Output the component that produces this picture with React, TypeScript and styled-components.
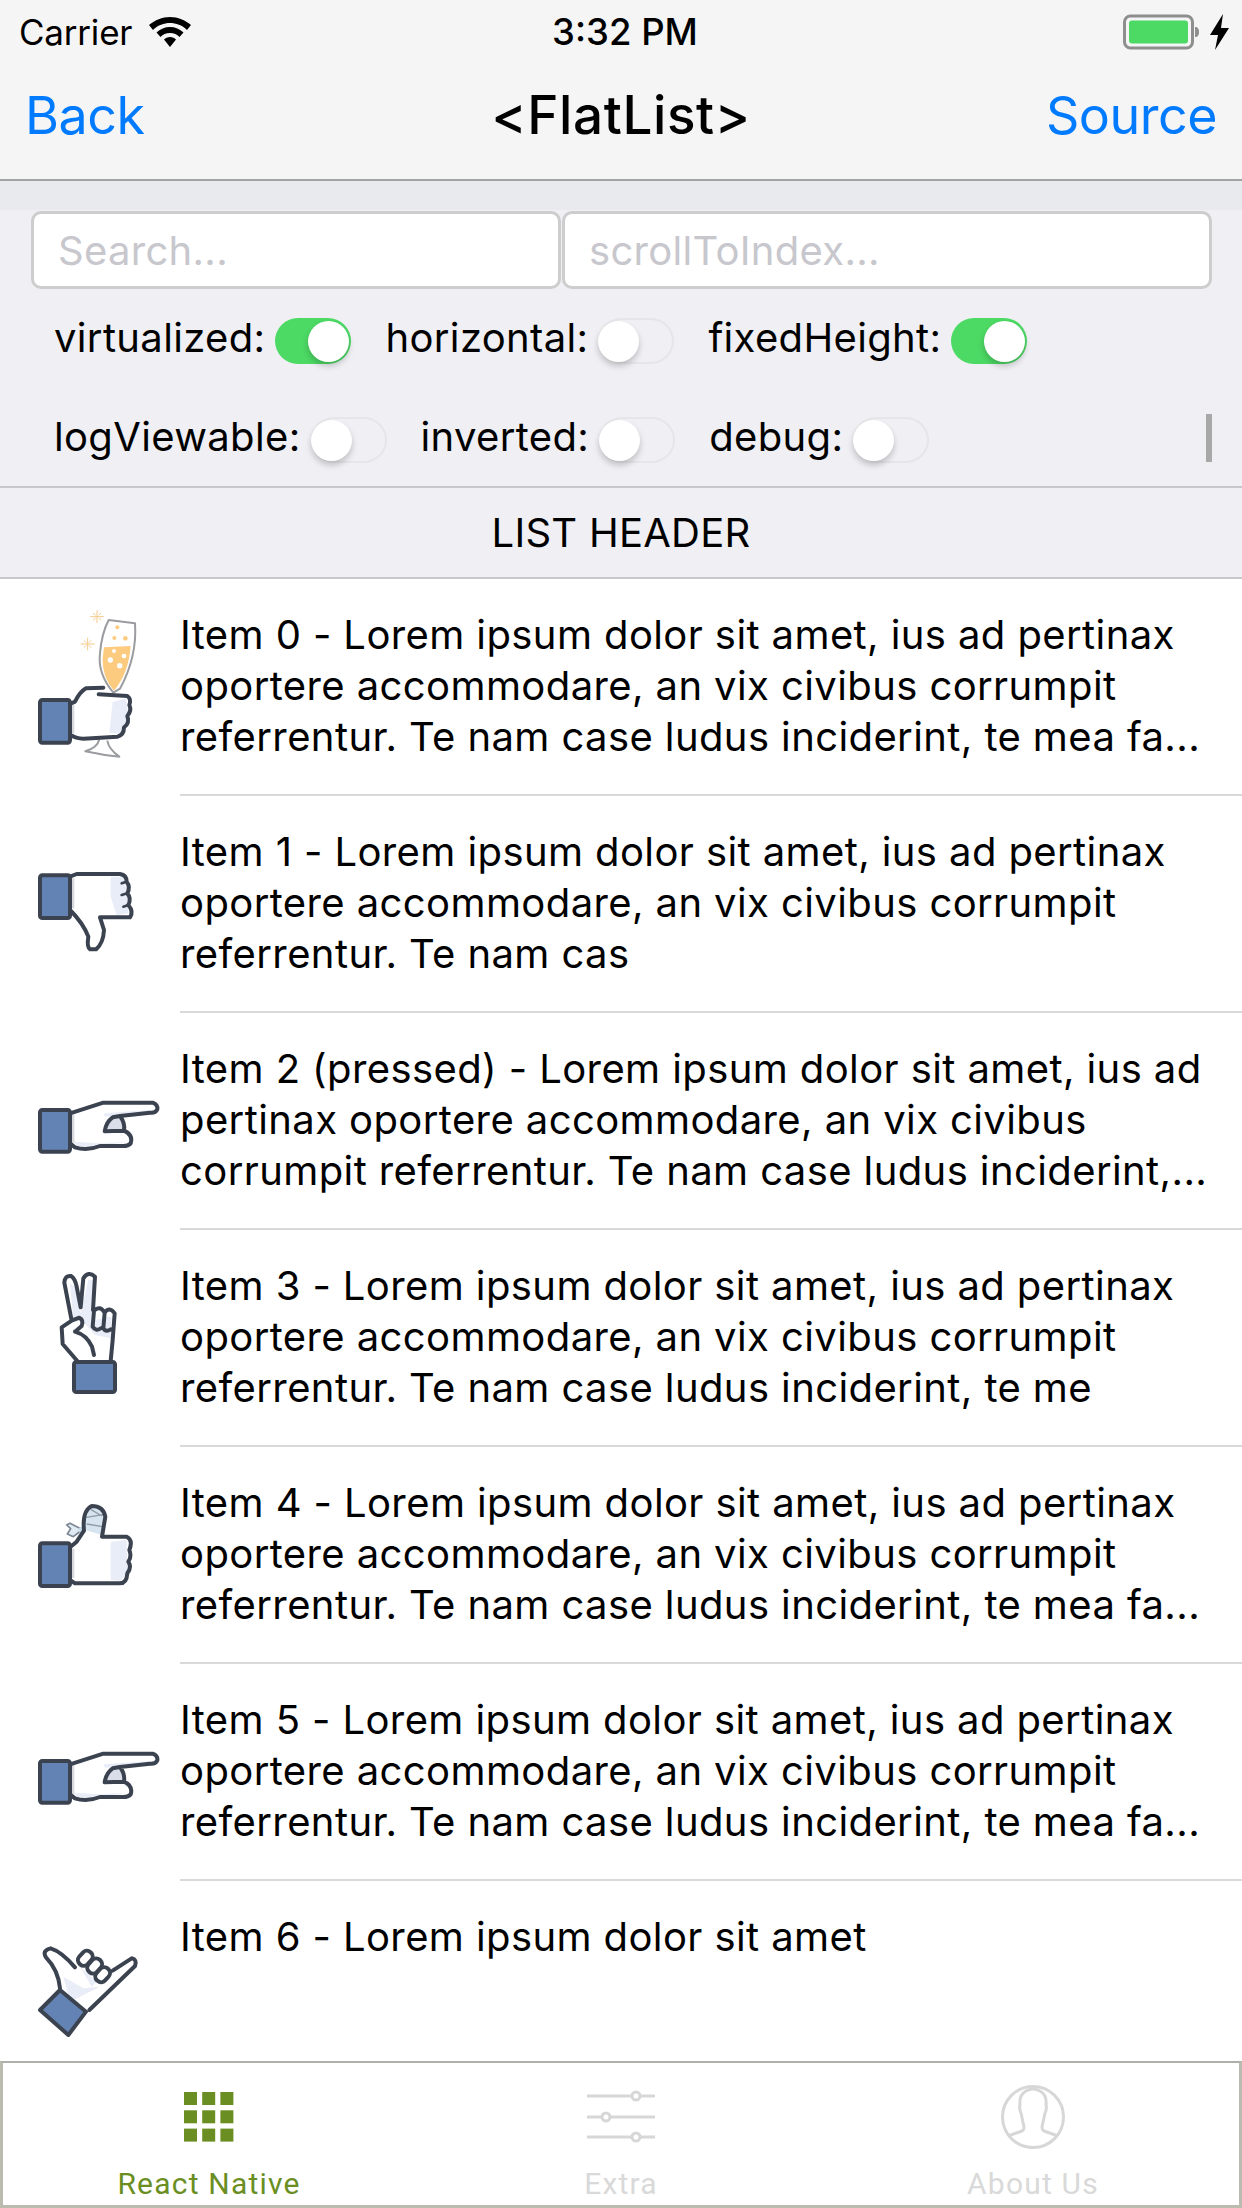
import React from 'react';
import styled, { createGlobalStyle } from 'styled-components';

const Global = createGlobalStyle`
  html, body { margin: 0; padding: 0; background: #fff; }
  * { box-sizing: border-box; }
`;

const Page = styled.div`
  width: 1242px;
  height: 2208px;
  display: flex;
  flex-direction: column;
  overflow: hidden;
  font-family: Inter, "Liberation Sans", sans-serif;
  color: #000;
  background: #fff;
`;

const NavBar = styled.header`
  height: 181px;
  flex: none;
  background: #f5f5f6;
  border-bottom: 2px solid #a3a3a5;
  display: flex;
  flex-direction: column;
`;

const StatusBar = styled.div`
  height: 63px;
  display: flex;
  align-items: center;
  padding: 0 9px 0 19px;
  position: relative;
`;

const Carrier = styled.span`
  font-size: 35px;
  letter-spacing: -0.2px;
  margin-right: 17px;
`;

const Clock = styled.span`
  position: absolute;
  left: 0;
  right: 0;
  padding-left: 8px;
  text-align: center;
  font-size: 36.500px;
  font-weight: 500;
`;

const StatusRight = styled.div`
  margin-left: auto;
  display: flex;
  align-items: center;
`;

const NavRow = styled.div`
  flex: 1;
  display: flex;
  align-items: center;
  justify-content: space-between;
  padding: 0 25px 12px 25px;
  position: relative;
`;

const NavLink = styled.span`
  color: #007aff;
  font-size: 52px;
  letter-spacing: -0.5px;
`;

const NavTitle = styled.span`
  position: absolute;
  left: 0;
  right: 0;
  text-align: center;
  font-size: 53px;
  font-weight: 500;
  letter-spacing: 0.6px;
`;

const Controls = styled.section`
  flex: none;
  height: 307px;
  background: #efeff4;
  border-bottom: 2px solid #c8c7cc;
  position: relative;
`;

const Band = styled.div`
  height: 29px;
  background: #e9eaee;
`;

const Inputs = styled.div`
  display: flex;
  gap: 1px;
  padding: 1px 30px 0 31px;
`;

const Field = styled.div<{ $w: number }>`
  width: ${p => p.$w}px;
  height: 78px;
  background: #fff;
  border: 3px solid #cdcdcd;
  border-radius: 10px;
  padding-left: 24px;
  display: flex;
  align-items: center;
  color: #c7c7cd;
  font-size: 40px;
  letter-spacing: 0.3px;
`;

const Options = styled.div`
  display: flex;
  flex-wrap: wrap;
  column-gap: 34px;
  row-gap: 53px;
  padding: 29px 0 0 54px;
`;

const Option = styled.div`
  display: flex;
  align-items: center;
  height: 46px;
  gap: 10px;
`;

const OptionLabel = styled.span`
  font-size: 40px;
  line-height: 46px;
  margin-top: -7px;
  letter-spacing: 0.35px;
`;

const Switch = styled.span<{ $on: boolean }>`
  position: relative;
  display: block;
  width: 76px;
  height: 46px;
  border-radius: 23px;
  background: ${p => (p.$on ? '#4cd964' : 'transparent')};
  border: ${p => (p.$on ? 'none' : '2px solid #e6e6e9')};
`;

const Thumb = styled.span<{ $on: boolean }>`
  position: absolute;
  top: ${p => (p.$on ? 3 : 1)}px;
  left: ${p => (p.$on ? 33 : -2)}px;
  width: 41px;
  height: 41px;
  border-radius: 50%;
  background: #fff;
  box-shadow: 0 4px 6px rgba(0, 0, 0, 0.2);
`;

const ScrollThumb = styled.span`
  position: absolute;
  left: 1206px;
  top: 233px;
  width: 6px;
  height: 48px;
  background: #a8a8a8;
`;

const ListHeader = styled.div`
  flex: none;
  height: 91px;
  background: #efeff4;
  border-bottom: 2px solid #c8c7cc;
  display: flex;
  align-items: center;
  justify-content: center;
  font-size: 40px;
  letter-spacing: 0.25px;
`;

const List = styled.div`
  flex: 1;
  min-height: 0;
  overflow: hidden;
`;

const Row = styled.div`
  height: 217px;
  display: flex;
  padding-left: 20px;
`;

const RowBody = styled.div<{ $last: boolean }>`
  flex: 1;
  height: 217px;
  padding-top: 30px;
  border-bottom: ${p => (p.$last ? 'none' : '2px solid #d9d9dc')};
`;

const Line = styled.div`
  font-size: 40px;
  line-height: 51px;
  letter-spacing: 0.4px;
  white-space: nowrap;
`;

const HandIcon = styled.svg`
  flex: none;
  width: 160px;
  height: 217px;
`;

const TabBar = styled.nav`
  flex: none;
  height: 147px;
  border: 3px solid #bbbbb0;
  border-top: 2px solid #b0b0aa;
  display: grid;
  grid-template-columns: repeat(3, 1fr);
`;

const Tab = styled.div<{ $active?: boolean }>`
  display: flex;
  flex-direction: column;
  align-items: center;
  color: ${p => (p.$active ? '#6b8e23' : '#d9d9d9')};
`;

const TabIcon = styled.svg`
  width: 80px;
  height: 80px;
  margin-top: 14px;
  flex: none;
`;

const TabLabel = styled.span`
  font-family: Roboto, "Liberation Sans", sans-serif;
  font-size: 30px;
  line-height: 36px;
  letter-spacing: 1.2px;
  margin-top: 9px;
`;

const ink = '#3c4350';
const blue = '#6483b5';
const shade = '#e9edf7';
const sw = 12;

const Cuff = ({ x, y, w, h }: { x: number; y: number; w: number; h: number }) => (
  <rect x={x} y={y} width={w} height={h} rx={7} fill={blue} stroke={ink} strokeWidth={sw} />
);

const hands: Record<string, { vy: number; body: React.ReactNode }> = {
  champagne: {
    vy: -33,
    body: (
      <>
        <g stroke="#f4c98a" strokeWidth={3} fill="none" strokeLinecap="round">
          <path d="M231 62V98M212 80H250M220 70L226 75M242 70L237 75M220 90L226 85M242 90L237 85" />
          <path d="M203 144V180M183 162H223M193 152L198 157M213 152L208 157M193 172L198 167M213 172L208 167" />
        </g>
        <path d="M252 172L332 168Q326 250 282 302Q246 262 248 205Z" fill="#fdcb80" />
        <g fill="#fff">
          <circle cx={282} cy={183} r={6} />
          <circle cx={271} cy={210} r={8} />
          <circle cx={312} cy={198} r={7} />
          <circle cx={299} cy={227} r={8} />
        </g>
        <g fill="#fdcb80">
          <circle cx={292} cy={112} r={6} />
          <circle cx={283} cy={144} r={6} />
          <circle cx={316} cy={145} r={7} />
        </g>
        <path d="M266 90L345 100Q352 200 300 296L280 308Q232 250 240 190Q245 130 266 90Z" fill="none" stroke="#9a9c9f" strokeWidth={6} strokeLinejoin="round" />
        <path d="M238 448Q232 474 196 484Q250 496 298 500Q266 478 262 452" fill="#fff" stroke="#9a9c9f" strokeWidth={6} strokeLinejoin="round" />
        <path d="M150 342L165 335Q180 305 198 295L250 293L280 312L322 318Q335 328 328 345Q336 362 322 378Q330 400 312 412Q312 436 292 440L190 446Q168 446 150 434Z" fill="#fff" />
        <path d="M278 336L318 325L325 378L308 432L268 428Z" fill={shade} />
        <path d="M150 342L165 335Q180 305 198 295L250 293M236 313L322 318Q335 328 328 345Q336 362 322 378Q330 400 312 412Q312 436 292 440L190 446Q168 446 150 434" fill="none" stroke={ink} strokeWidth={sw} strokeLinejoin="round" strokeLinecap="round" />
        <rect x={150} y={345} width={13} height={86} fill="#d6d8dc" />
        <Cuff x={60} y={330} w={90} h={128} />
      </>
    ),
  },
  down: {
    vy: -102,
    body: (
      <>
        <path d="M150 140L170 132H300Q320 135 320 155Q332 170 322 190Q335 205 325 225Q342 245 330 262H240L252 300Q250 340 228 358H210Q200 352 205 320Q190 280 150 240Z" fill="#fff" />
        <path d="M272 140L310 140L322 190L325 250L290 256L272 200Z" fill={shade} />
        <rect x={150} y={145} width={13} height={90} fill="#d6d8dc" />
        <path d="M150 140L170 132H300Q320 135 320 155Q332 170 322 190Q335 205 325 225Q342 245 330 262H240L252 300Q250 340 228 358H210Q200 352 205 320Q190 280 150 240" fill="none" stroke={ink} strokeWidth={sw} strokeLinejoin="round" strokeLinecap="round" />
        <path d="M320 155L305 160M322 190L305 195M325 225L310 230" stroke={ink} strokeWidth={8} strokeLinecap="round" />
        <Cuff x={60} y={136} w={90} h={128} />
      </>
    ),
  },
  point: {
    vy: -141,
    body: (
      <>
        <path d="M150 160L250 128H398Q414 134 412 148Q406 160 390 158L300 168Q316 190 312 212Q340 225 332 250L240 258Q200 274 165 262L150 250Z" fill="#fff" />
        <path d="M250 160L390 150V158L300 168L255 170ZM160 245L240 250L325 245L240 258L175 260Z" fill={shade} />
        <path d="M258 212Q258 186 278 172L300 168Q316 190 312 212Z" fill="#d9dee9" />
        <rect x={150} y={160} width={13} height={88} fill="#d6d8dc" />
        <path d="M150 160L250 128H398Q414 134 412 148Q406 160 390 158L300 168Q316 190 312 212Q340 225 332 250Q325 258 310 258H240Q200 274 165 262L150 250M300 168L278 172Q258 186 254 214L312 212" fill="none" stroke={ink} strokeWidth={sw} strokeLinejoin="round" strokeLinecap="round" />
        <Cuff x={60} y={150} w={90} h={125} />
      </>
    ),
  },
  peace: {
    vy: -60,
    body: (
      <>
        <path d="M172 333L128 282L125 232L155 210L133 98Q135 75 153 78Q165 85 170 110L182 172L190 85Q205 62 225 80L220 172L222 182Q240 165 250 185Q268 168 284 190L278 270L272 333Z" fill="#fff" />
        <path d="M150 100L170 115L182 190L205 90H222L212 215L262 200L275 200L272 265L225 255L190 215L160 210Z" fill={shade} />
        <path d="M172 333L128 282L125 232L155 212L133 98Q135 75 153 78Q165 85 170 110L182 172L190 85Q205 62 225 80L219 180M155 212L178 203Q192 210 185 228L165 245M165 245Q200 255 216 290L222 315M272 333L278 270L284 190Q268 168 254 188L250 235Q258 248 272 238M254 188Q240 165 222 182L218 230Q228 246 244 234" fill="none" stroke={ink} strokeWidth={sw} strokeLinejoin="round" strokeLinecap="round" />
        <Cuff x={162} y={336} w={123} h={90} />
      </>
    ),
  },
  bandage: {
    vy: -99,
    body: (
      <>
        <path d="M150 200L190 158L245 170H320Q340 180 328 210Q336 230 325 245Q336 262 322 280Q320 310 300 310H165L150 300Z" fill="#fff" />
        <path d="M272 185L320 180L322 280L300 303L272 300Z" fill={shade} />
        <path d="M195 150Q188 92 215 78Q250 78 256 110L246 165Z" fill="#d6e4ef" />
        <path d="M198 112L250 104M200 132L248 140M212 88L246 108" stroke="#8f9aa6" strokeWidth={4} fill="none" />
        <path d="M190 150L150 130L140 135L152 146L142 162L160 170L178 156Z" fill="#dfeaf3" stroke="#7c8793" strokeWidth={5} strokeLinejoin="round" />
        <circle cx={186} cy={150} r={10} fill="#c8deec" />
        <rect x={150} y={206} width={13} height={88} fill="#d6d8dc" />
        <path d="M150 202L170 185L192 152Q186 92 215 78Q250 78 256 110L246 170H320Q340 180 328 210Q336 230 325 245Q336 262 322 280Q320 310 300 310H165L150 300" fill="none" stroke={ink} strokeWidth={sw} strokeLinejoin="round" strokeLinecap="round" />
        <Cuff x={60} y={190} w={90} h={128} />
      </>
    ),
  },
  shaka: {
    vy: 3,
    body: (
      <>
        <path d="M120 325Q115 270 78 232Q65 212 92 205Q125 215 165 262L275 275L335 235Q352 238 345 258L208 390Z" fill="#fff" />
        <path d="M130 290L190 325L240 320L150 365ZM180 260L215 320L230 305Z" fill={shade} />
        <path d="M208 390L345 258Q352 238 335 235L278 272M120 325Q115 270 78 232Q65 212 92 205Q125 215 165 262" fill="none" stroke={ink} strokeWidth={sw} strokeLinejoin="round" strokeLinecap="round" />
        <g fill="#fff" stroke={ink} strokeWidth={sw}>
          <rect x={-24} y={-17} width={48} height={34} rx={16} transform="translate(196 235) rotate(-48)" />
          <rect x={-24} y={-17} width={48} height={34} rx={16} transform="translate(224 258) rotate(-48)" />
          <rect x={-24} y={-17} width={48} height={34} rx={16} transform="translate(248 284) rotate(-48)" />
        </g>
        <path d="M120 330L198 395L145 465L60 390Z" fill={blue} stroke={ink} strokeWidth={sw} strokeLinejoin="round" />
      </>
    ),
  },
};

const items: { hand: string; lines: string[] }[] = [
  { hand: 'champagne', lines: ['Item 0 - Lorem ipsum dolor sit amet, ius ad pertinax', 'oportere accommodare, an vix civibus corrumpit', 'referrentur. Te nam case ludus inciderint, te mea fa...'] },
  { hand: 'down', lines: ['Item 1 - Lorem ipsum dolor sit amet, ius ad pertinax', 'oportere accommodare, an vix civibus corrumpit', 'referrentur. Te nam cas'] },
  { hand: 'point', lines: ['Item 2 (pressed) - Lorem ipsum dolor sit amet, ius ad', 'pertinax oportere accommodare, an vix civibus', 'corrumpit referrentur. Te nam case ludus inciderint,...'] },
  { hand: 'peace', lines: ['Item 3 - Lorem ipsum dolor sit amet, ius ad pertinax', 'oportere accommodare, an vix civibus corrumpit', 'referrentur. Te nam case ludus inciderint, te me'] },
  { hand: 'bandage', lines: ['Item 4 - Lorem ipsum dolor sit amet, ius ad pertinax', 'oportere accommodare, an vix civibus corrumpit', 'referrentur. Te nam case ludus inciderint, te mea fa...'] },
  { hand: 'point', lines: ['Item 5 - Lorem ipsum dolor sit amet, ius ad pertinax', 'oportere accommodare, an vix civibus corrumpit', 'referrentur. Te nam case ludus inciderint, te mea fa...'] },
  { hand: 'shaka', lines: ['Item 6 - Lorem ipsum dolor sit amet'] },
];

const options: { label: string; on: boolean }[] = [
  { label: 'virtualized:', on: true },
  { label: 'horizontal:', on: false },
  { label: 'fixedHeight:', on: true },
  { label: 'logViewable:', on: false },
  { label: 'inverted:', on: false },
  { label: 'debug:', on: false },
];

const Wifi = () => (
  <svg width="42" height="30" viewBox="0 0 42 30">
    <path d="M21 0C13 0 6 3 0 8l4 5C9 8 15 6 21 6s12 2 17 7l4-5C36 3 29 0 21 0z" fill="#000" />
    <path d="M21 10c-5 0-10 2-13.500 5.500l4 4.500C14 17.500 17 16 21 16s7 1.500 9.500 4l4-4.500C31 12 26 10 21 10z" fill="#000" />
    <path d="M21 20c-2.500 0-4.500 1-6 2.500L21 30l6-7.500c-1.500-1.500-3.500-2.500-6-2.500z" fill="#000" />
  </svg>
);

const Battery = () => (
  <svg width="110" height="36" viewBox="0 0 110 36">
    <rect x="1.500" y="2" width="68" height="32" rx="6" fill="none" stroke="#8e8e8e" strokeWidth="3" />
    <rect x="6" y="6.500" width="59" height="23" rx="3" fill="#4cd964" />
    <path d="M72 13c3 0 4 2 4 5s-1 5-4 5z" fill="#8e8e8e" />
    <path d="M100 0L87 21h8l-3 15 14-22h-8z" fill="#000" />
  </svg>
);

export default function App() {
  return (
    <Page>
      <Global />
      <NavBar>
        <StatusBar>
          <Carrier>Carrier</Carrier>
          <Wifi />
          <Clock>3:32 PM</Clock>
          <StatusRight>
            <Battery />
          </StatusRight>
        </StatusBar>
        <NavRow>
          <NavLink>Back</NavLink>
          <NavTitle>&lt;FlatList&gt;</NavTitle>
          <NavLink>Source</NavLink>
        </NavRow>
      </NavBar>
      <Controls>
        <Band />
        <Inputs>
          <Field $w={530}>Search...</Field>
          <Field $w={650}>scrollToIndex...</Field>
        </Inputs>
        <Options>
          {options.map(o => (
            <Option key={o.label}>
              <OptionLabel>{o.label}</OptionLabel>
              <Switch $on={o.on}>
                <Thumb $on={o.on} />
              </Switch>
            </Option>
          ))}
        </Options>
        <ScrollThumb />
      </Controls>
      <ListHeader>LIST HEADER</ListHeader>
      <List>
        {items.map((it, i) => (
          <Row key={i}>
            <HandIcon viewBox={`0 ${hands[it.hand].vy} 480 651`}>{hands[it.hand].body}</HandIcon>
            <RowBody $last={i === items.length - 1}>
              {it.lines.map(l => (
                <Line key={l}>{l}</Line>
              ))}
            </RowBody>
          </Row>
        ))}
      </List>
      <TabBar>
        <Tab $active>
          <TabIcon viewBox="0 0 80 80">
            <g fill="#6b8e23">
              {[0, 1, 2].flatMap(r =>
                [0, 1, 2].map(c => <rect key={`${r}${c}`} x={15 + c * 18.2} y={15 + r * 18.3} width={13} height={13} />)
              )}
            </g>
          </TabIcon>
          <TabLabel>React Native</TabLabel>
        </Tab>
        <Tab>
          <TabIcon viewBox="0 0 80 80">
            <g stroke="#d7d7d7" strokeWidth={3} fill="none">
              <path d="M6 19H50M60 19H74M6 40H20M30 40H74M6 60H50M60 60H74" />
              <circle cx={55} cy={19} r={4} />
              <circle cx={25} cy={40} r={4} />
              <circle cx={55} cy={60} r={4} />
            </g>
          </TabIcon>
          <TabLabel>Extra</TabLabel>
        </Tab>
        <Tab>
          <TabIcon viewBox="0 0 80 80">
            <g stroke="#d7d7d7" strokeWidth={3} fill="none">
              <circle cx={40} cy={40} r={30.500} />
              <path d="M15 59L29 54Q31 53 31 50L28 36Q26 33 27 27Q26 18 33 14Q40 10 47 14Q54 18 53 27Q54 33 52 36L49 50Q49 53 51 54L65 59" strokeLinejoin="round" />
            </g>
          </TabIcon>
          <TabLabel>About Us</TabLabel>
        </Tab>
      </TabBar>
    </Page>
  );
}
